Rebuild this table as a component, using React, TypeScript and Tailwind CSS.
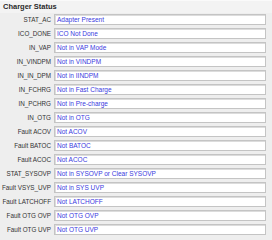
const rows: [string, string][] = [
  ["STAT_AC", "Adapter Present"],
  ["ICO_DONE", "ICO Not Done"],
  ["IN_VAP", "Not in VAP Mode"],
  ["IN_VINDPM", "Not in VINDPM"],
  ["IN_IN_DPM", "Not in IINDPM"],
  ["IN_FCHRG", "Not in Fast Charge"],
  ["IN_PCHRG", "Not in Pre-charge"],
  ["IN_OTG", "Not in OTG"],
  ["Fault ACOV", "Not ACOV"],
  ["Fault BATOC", "Not BATOC"],
  ["Fault ACOC", "Not ACOC"],
  ["STAT_SYSOVP", "Not in SYSOVP or Clear SYSOVP"],
  ["Fault VSYS_UVP", "Not in SYS UVP"],
  ["Fault LATCHOFF", "Not LATCHOFF"],
  ["Fault OTG OVP", "Not OTG OVP"],
  ["Fault OTG UVP", "Not OTG UVP"],
];

export default function App() {
  return (
    <div
      className="w-[272px] h-[240px] bg-[#eeeeee] overflow-hidden"
      style={{ fontFamily: '"Liberation Sans", Arial, sans-serif' }}
    >
      {/* group header */}
      <div className="h-[13px] bg-[#f3f3f3] border-t border-[#fafafa] flex items-start pl-[3px]">
        <span className="text-[7.5px] leading-[11px] font-bold text-[#2a2a2a]">Charger Status</span>
      </div>
      <div className="flex flex-col gap-[3px] pt-[1px]">
        {rows.map(([label, value]) => (
          <div key={label} className="flex items-center h-[11px]">
            <span className="w-[54px] pr-[3px] text-right text-[6.3px] leading-[11px] text-[#333] whitespace-nowrap">
              {label}
            </span>
            <div className="w-[212px] h-[11px] bg-white border border-[#c4c4c4] shadow-[inset_1px_1px_0_#dcdcdc] flex items-center pl-[2px]">
              <span className="text-[6.5px] leading-[9px] text-[#3a3ae0] whitespace-nowrap">{value}</span>
            </div>
          </div>
        ))}
      </div>
    </div>
  );
}
